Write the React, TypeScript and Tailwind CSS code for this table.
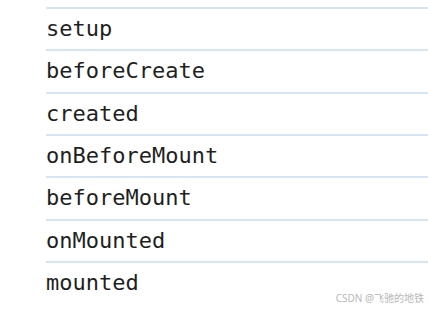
const hooks = [
  'setup',
  'beforeCreate',
  'created',
  'onBeforeMount',
  'beforeMount',
  'onMounted',
  'mounted',
];

export default function App() {
  return (
    <main className="relative h-[310px] w-[428px] overflow-hidden bg-white">
      <ul className="pl-[46px] pt-[7px]">
        {hooks.map((name) => (
          <li
            key={name}
            className="border-t-2 border-[#d6e4f8] text-[22px] leading-[40.33px] text-[#1f1f1f]"
            style={{ fontFamily: '"DejaVu Sans Mono", "Liberation Mono", monospace' }}
          >
            {name}
          </li>
        ))}
      </ul>
      <span
        className="absolute right-[4px] top-[291px] text-[10px] text-[#b8b8b8]"
        style={{ fontFamily: '"Noto Sans", "Noto Sans CJK SC", sans-serif' }}
      >
        CSDN @飞驰的地铁
      </span>
    </main>
  );
}
